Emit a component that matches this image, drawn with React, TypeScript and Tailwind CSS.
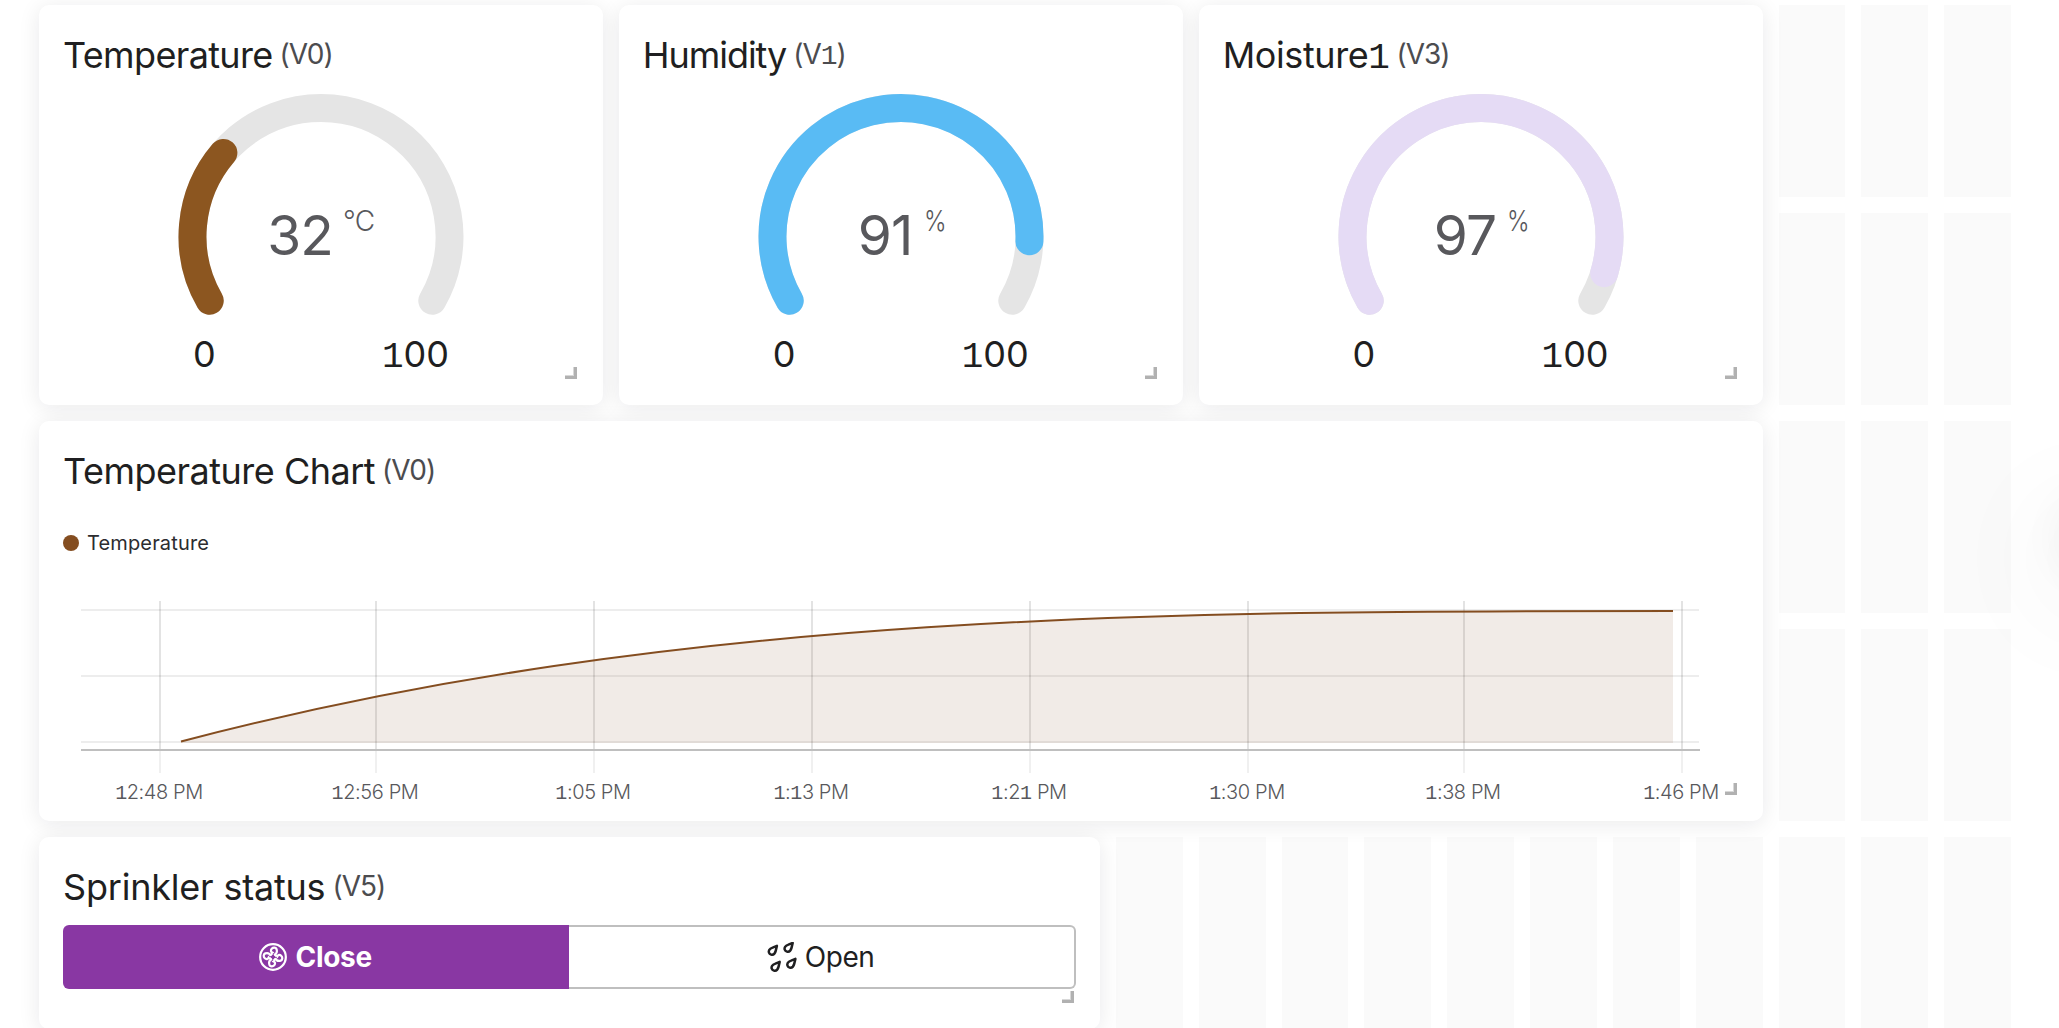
import React from "react";

/* Renders text with a slab-footed figure one. */
function Figures({ text }: { text: string }) {
  return (
    <>
      {text.split(/(1)/).map((part, i) =>
        part === "1" ? (
          <span key={i} className="font-['Liberation_Mono',monospace]">1</span>
        ) : (
          part
        ),
      )}
    </>
  );
}

function Card({
  title,
  pin,
  className,
  titleClass,
  children,
}: {
  title: string;
  pin: string;
  className: string;
  titleClass: string;
  children: React.ReactNode;
}) {
  return (
    <section
      className={`relative rounded-[10px] bg-white px-6 pt-7 shadow-[0_3px_22px_rgba(20,20,30,0.09)] ${className}`}
    >
      <h2 className="flex h-11 items-baseline whitespace-nowrap text-[36px] leading-[44px] text-[#1f1f21]">
        <span className={titleClass}>
          <Figures text={title} />
        </span>
        <span className="relative -top-1 ml-[7px] text-[28px] tracking-[-1px] text-[#4c4c4f]">
          <Figures text={pin} />
        </span>
      </h2>
      {children}
      <span className="absolute right-[26px] bottom-[26px] size-3 border-r-[3px] border-b-[3px] border-[#b1b1b1] shadow-[inset_-1px_-1px_0_#d8d8d8]" />
    </section>
  );
}

const R = 128.5;
function point(deg: number) {
  const a = (deg * Math.PI) / 180;
  return `${(143 + R * Math.cos(a)).toFixed(2)} ${(143.5 + R * Math.sin(a)).toFixed(2)}`;
}
function arc(sweep: number) {
  return `M${point(150)}A${R} ${R} 0 ${sweep > 180 ? 1 : 0} 1 ${point(150 + sweep)}`;
}

function Gauge({ value, unit, color }: { value: number; unit: string; color: string }) {
  return (
    <div className="mx-auto mt-4 w-[286px]">
      <div className="relative h-[230px]">
        <svg width="286" height="230" fill="none" strokeWidth="28" strokeLinecap="round">
          <path d={arc(240)} stroke="#e5e5e5" />
          <path d={arc(value * 2.4 - 6.24)} stroke={color} />
        </svg>
        <div className="absolute inset-x-0 top-[108px] flex items-start justify-center text-[#58585c]">
          <span className="text-[55px] leading-[68px] tracking-[-0.8px]">{value}</span>
          {unit === "%" ? (
            <span className="mt-0.5 -mr-[6px] ml-[11px] origin-left scale-x-[0.86] text-[28px] leading-9 font-light">{unit}</span>
          ) : (
            <span className="mt-0.5 ml-2.5 text-[28px] leading-9 font-light tracking-[-0.6px]">{unit}</span>
          )}
        </div>
      </div>
      <div className="mt-[9px] flex justify-between pr-[15px] pl-[15px] text-[36px] leading-[44px] text-[#1f1f21]">
        <span>0</span>
        <span>
          <Figures text="100" />
        </span>
      </div>
    </div>
  );
}

const TICKS: [number, string][] = [
  [97, "12:48 PM"],
  [313, "12:56 PM"],
  [531, "1:05 PM"],
  [749, "1:13 PM"],
  [967, "1:21 PM"],
  [1185, "1:30 PM"],
  [1401, "1:38 PM"],
  [1619, "1:46 PM"],
];

function TemperatureChart() {
  const curve = "M118 150.5C615.3 20 1112.7 20 1610 20";
  return (
    <svg width="1676" height="220" className="mt-9 block overflow-visible">
      <g fill="#000" fillOpacity="0.07">
        <rect x="18" y="18" width="1618" height="2" />
        <rect x="18" y="84" width="1618" height="2" />
        <rect x="18" y="150" width="1618" height="2" />
      </g>
      {TICKS.map(([x]) => (
        <g key={x}>
          <rect x={x - 1} y="10" width="2" height="150" fill="#000" fillOpacity="0.11" />
          <rect x={x - 1} y="160" width="2" height="22" fill="#000" fillOpacity="0.06" />
        </g>
      ))}
      <rect x="18" y="158" width="1619" height="2" fill="#bfbfbf" />
      <path d={`${curve}V152H118Z`} fill="#844d20" fillOpacity="0.11" />
      <path d={curve} fill="none" stroke="#844d20" strokeWidth="2" />
      <g fontSize="20" fill="#58585c" textAnchor="middle" className="font-light tracking-[-0.4px]">
        {TICKS.map(([x, label]) => (
          <text key={x} x={x - 1} y="208">
            {label.split(/(1)/).map((part, i) =>
              part === "1" ? (
                <tspan key={i} className="font-['Liberation_Mono',monospace]">1</tspan>
              ) : (
                part
              ),
            )}
          </text>
        ))}
      </g>
    </svg>
  );
}

function FanIcon() {
  const blade = "M12.8 10.2C15 9.2 15.8 7.4 15.1 5.4C14.3 3.6 12.1 3.7 10.9 5C9.8 6.2 10.1 7.6 11.4 8.2C10.6 8.8 10.7 9.8 11.2 10.4";
  return (
    <svg width="28" height="28" viewBox="0 0 24 24" fill="none" stroke="currentColor" strokeWidth="1.9">
      <circle cx="12" cy="12" r="11" />
      {[0, 90, 180, 270].map((a) => (
        <path key={a} d={blade} transform={`rotate(${a} 12 12)`} />
      ))}
    </svg>
  );
}

function DropsIcon() {
  const drop = "M9.9 1.4L8.7 6.4C8 9.2 6.2 10.6 4.1 10.1C1.9 9.5 1.2 7.2 2.3 5.4C3 4.2 4.4 3.5 5.6 3.1Z";
  return (
    <svg width="30" height="30" fill="none" stroke="currentColor" strokeWidth="2.5" strokeLinejoin="round">
      <path d={drop} transform="translate(0 2.5)" />
      <path d={drop} transform="translate(15.8 -0.5)" />
      <path d={drop} transform="translate(2.8 18.5)" />
      <path d={drop} transform="translate(18.5 15.5)" />
    </svg>
  );
}

function Slots({ count }: { count: number }) {
  return (
    <>
      {Array.from({ length: count }, (_, i) => (
        <div key={i} className="bg-[#fafafa]" />
      ))}
    </>
  );
}

export default function App() {
  return (
    <div className="relative h-[1028px] w-[2059px] overflow-hidden bg-white font-['Inter',sans-serif]">
      <main className="grid w-[2011px] grid-cols-[repeat(24,minmax(0,1fr))] grid-rows-[repeat(5,192px)] gap-4 pt-[5px] pl-[39px]">
        <Card title="Temperature" pin="(V0)" className="col-span-7 row-span-2" titleClass="tracking-[-0.65px]">
          <Gauge value={32} unit="°C" color="#8c5620" />
        </Card>
        <Card title="Humidity" pin="(V1)" className="col-span-7 row-span-2" titleClass="tracking-[-1.05px]">
          <Gauge value={91} unit="%" color="#59bbf4" />
        </Card>
        <Card title="Moisture1" pin="(V3)" className="col-span-7 row-span-2" titleClass="tracking-[-0.4px]">
          <Gauge value={97} unit="%" color="#e5dbf5" />
        </Card>
        <Slots count={6} />
        <Card title="Temperature Chart" pin="(V0)" className="col-span-21 row-span-2" titleClass="tracking-[-0.5px]">
          <div className="mt-[38px] flex h-6 items-center gap-2 text-[20px] text-[#2c2c2f]">
            <span className="size-4 rounded-full bg-[#844d20]" />
            <span className="tracking-[0.15px]">Temperature</span>
          </div>
          <TemperatureChart />
        </Card>
        <Slots count={6} />
        <Card title="Sprinkler status" pin="(V5)" className="col-span-13" titleClass="tracking-[-0.2px]">
          <div className="mt-4 flex h-16 text-[28px]">
            <button className="flex w-1/2 items-center justify-center gap-[9px] rounded-l-md bg-[#8937a3] pr-0.5 font-bold text-white">
              <FanIcon />
              <span className="tracking-[-0.3px]">Close</span>
            </button>
            <button className="flex w-1/2 items-center justify-center gap-2 rounded-r-md border-2 border-l-0 border-[#bfbfbf] pr-0.5 text-[#1f1f21]">
              <DropsIcon />
              <span className="tracking-[-0.4px]">Open</span>
            </button>
          </div>
        </Card>
        <Slots count={11} />
      </main>
      <div className="absolute top-[508px] left-[2066px] size-[60px] rounded-full shadow-[0_0_50px_2px_rgba(0,0,0,0.07),0_20px_120px_24px_rgba(0,0,0,0.06)]" />
    </div>
  );
}
